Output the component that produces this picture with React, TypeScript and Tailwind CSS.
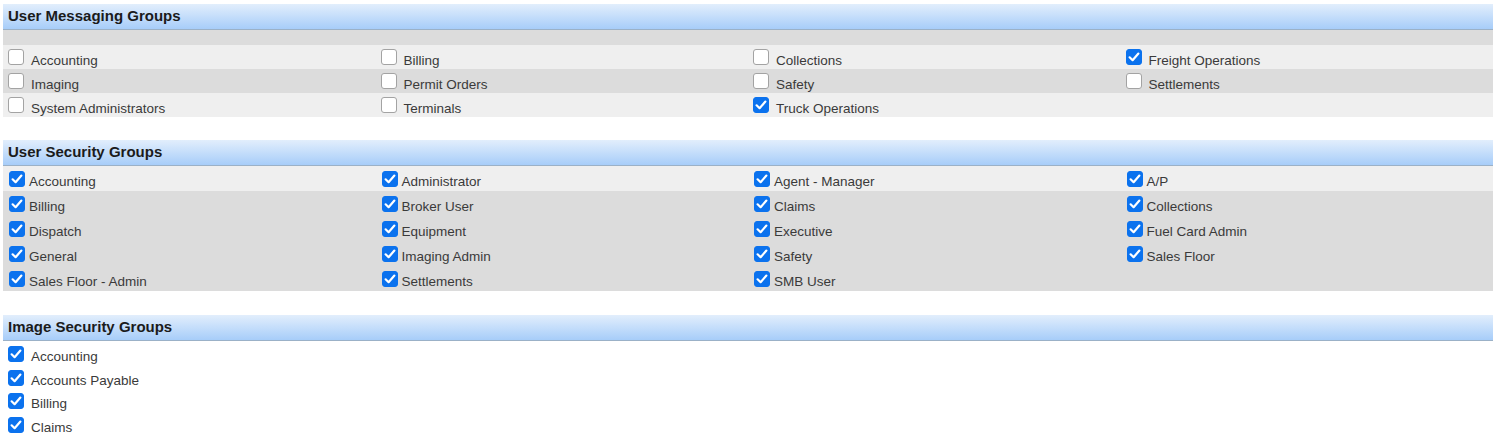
import React from 'react';

type Item = { label: string; checked: boolean };

const messagingRows: Item[][] = [
  [
    { label: 'Accounting', checked: false },
    { label: 'Billing', checked: false },
    { label: 'Collections', checked: false },
    { label: 'Freight Operations', checked: true },
  ],
  [
    { label: 'Imaging', checked: false },
    { label: 'Permit Orders', checked: false },
    { label: 'Safety', checked: false },
    { label: 'Settlements', checked: false },
  ],
  [
    { label: 'System Administrators', checked: false },
    { label: 'Terminals', checked: false },
    { label: 'Truck Operations', checked: true },
  ],
];

const securityRows: string[][] = [
  ['Accounting', 'Administrator', 'Agent - Manager', 'A/P'],
  ['Billing', 'Broker User', 'Claims', 'Collections'],
  ['Dispatch', 'Equipment', 'Executive', 'Fuel Card Admin'],
  ['General', 'Imaging Admin', 'Safety', 'Sales Floor'],
  ['Sales Floor - Admin', 'Settlements', 'SMB User'],
];

const imageGroups = ['Accounting', 'Accounts Payable', 'Billing', 'Claims'];

function Box({ checked }: { checked: boolean }) {
  return (
    <span className="relative inline-flex w-4 h-4 shrink-0">
      <input
        type="checkbox"
        readOnly
        checked={checked}
        className={`appearance-none w-4 h-4 rounded-[3px] border m-0 ${
          checked ? 'bg-[#0b72ee] border-[#0b72ee]' : 'bg-white border-[#a3a3a3]'
        }`}
      />
      {checked && (
        <svg viewBox="0 0 16 16" className="absolute inset-0 w-4 h-4 pointer-events-none">
          <path d="M3.6 8.3 L6.6 11.2 L12.4 4.6" fill="none" stroke="white" strokeWidth="2.2" strokeLinecap="round" strokeLinejoin="round" />
        </svg>
      )}
    </span>
  );
}

function Header({ title }: { title: string }) {
  return (
    <div className="h-[26px] flex items-center px-[5px] bg-gradient-to-b from-[#e2eefc] to-[#a7cdf9] border-b border-[#9bb1c7]">
      <span className="text-[15px] font-bold text-[#1b1b1b]">{title}</span>
    </div>
  );
}

export default function App() {
  return (
    <div className="w-[1497px] h-[439px] overflow-hidden bg-white pt-[4px] pl-[3px] pr-[4px] text-[13.5px] text-[#3a3a3a]" style={{ fontFamily: '"Liberation Sans", Arial, sans-serif' }}>
      {/* User Messaging Groups */}
      <Header title="User Messaging Groups" />
      <div className="h-[15px] bg-[#dcdcdc]" />
      {messagingRows.map((row, r) => (
        <div key={r} className={`grid grid-cols-4 h-[24px] ${r === 1 ? 'bg-[#dcdcdc]' : 'bg-[#efefef]'}`}>
          {row.map((it) => (
            <div key={it.label} className="flex items-start pl-[5px] gap-[7px]">
              <span className="mt-[4px] flex"><Box checked={it.checked} /></span>
              <span className="mt-[8px] leading-[16px]">{it.label}</span>
            </div>
          ))}
        </div>
      ))}

      {/* User Security Groups */}
      <div className="mt-[23px]">
        <Header title="User Security Groups" />
        {securityRows.map((row, r) => (
          <div key={r} className={`grid grid-cols-4 h-[25px] ${r === 0 ? 'bg-[#efefef]' : 'bg-[#dcdcdc]'}`}>
            {row.map((label) => (
              <div key={label} className="flex items-start pl-[6px] gap-[4px]">
                <span className="mt-[5px] flex"><Box checked /></span>
                <span className="mt-[8px] leading-[16px]">{label}</span>
              </div>
            ))}
          </div>
        ))}
      </div>

      {/* Image Security Groups */}
      <div className="mt-[24px]">
        <Header title="Image Security Groups" />
        <div className="pt-[3px]">
          {imageGroups.map((label) => (
            <div key={label} className="flex items-start h-[23.7px] pl-[5px] gap-[7px]">
              <span className="mt-[2px] flex"><Box checked /></span>
              <span className="mt-[5px] leading-[16px]">{label}</span>
            </div>
          ))}
        </div>
      </div>
    </div>
  );
}
